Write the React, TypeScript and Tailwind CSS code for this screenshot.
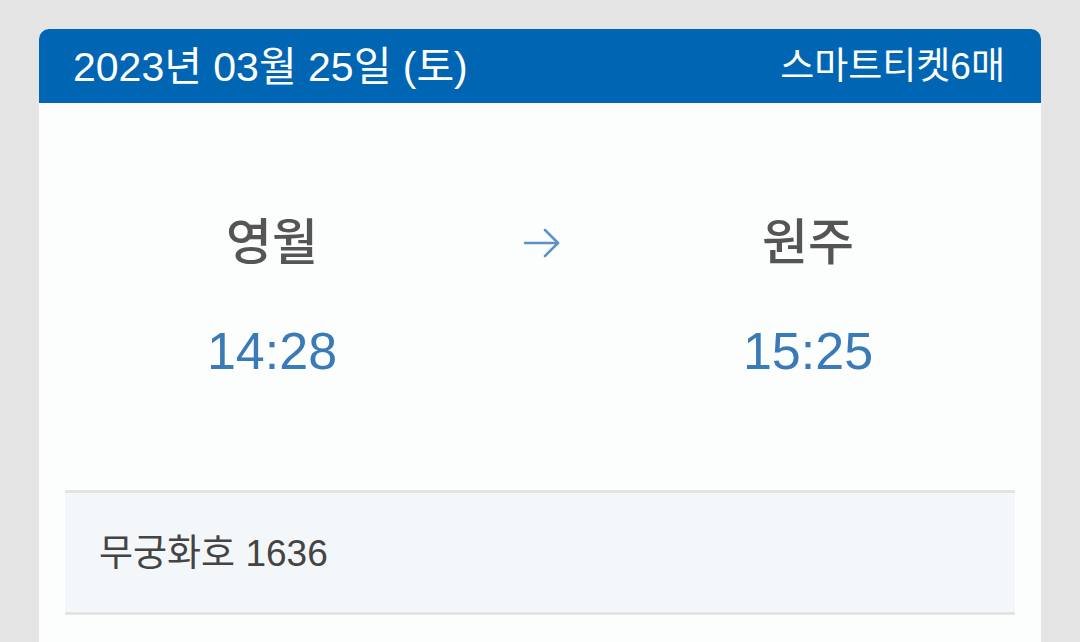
import React from 'react';

const font = { fontFamily: '"Liberation Sans", "Noto Sans CJK KR", sans-serif' };

const ArrowRight: React.FC = () => (
  <svg width="38" height="32" viewBox="0 0 38 32" fill="none" stroke="#5b93c8" strokeWidth="2.5" strokeLinecap="round" strokeLinejoin="round">
    <path d="M2 16 H35" />
    <path d="M22 3 L35 16 L22 29" />
  </svg>
);

const Station: React.FC<{ name: string; time: string }> = ({ name, time }) => (
  <div className="w-[300px] flex flex-col items-center">
    <div className="text-[50px] leading-[56px] font-medium text-[#555555]">{name}</div>
    <div className="mt-[50px] text-[52px] leading-[60px] text-[#3a7ab6]">{time}</div>
  </div>
);

export default function App() {
  return (
    <div className="w-[1080px] h-[642px] overflow-hidden bg-[#e5e5e5] pt-[29px] px-[39px]" style={font}>
      <div className="rounded-t-[10px] overflow-hidden bg-[#fcfdfd] h-[613px]">
        <div className="h-[74px] bg-[#0066b3] flex items-center justify-between pl-[34px] pr-[36px] text-white">
          <span className="text-[41px] leading-[48px] pt-[2px]">2023년 03월 25일 (토)</span>
          <span className="text-[37px] leading-[48px] pt-[2px]">스마트티켓6매</span>
        </div>

        <div className="flex justify-center pt-[112px] pb-[109px]">
          <Station name="영월" time="14:28" />
          <div className="w-[236px] flex justify-center pt-[12px] pl-[3px]">
            <div className="h-[32px]">
              <ArrowRight />
            </div>
          </div>
          <Station name="원주" time="15:25" />
        </div>

        <div className="mx-[26px] h-[125px] border-y-[3px] border-[#e4e4e4] bg-[#f4f7fa] flex items-center px-[34px]">
          <span className="text-[37px] leading-[44px] pt-[2px] text-[#444444]">무궁화호 1636</span>
        </div>
      </div>
    </div>
  );
}
